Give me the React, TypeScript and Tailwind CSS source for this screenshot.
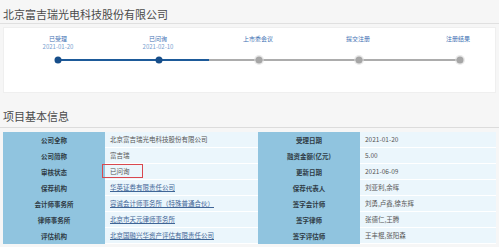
import React from "react";

const steps = [
  { label: "已受理", date: "2021-01-20" },
  { label: "已问询", date: "2021-02-10" },
  { label: "上市委会议", date: "" },
  { label: "提交注册", date: "" },
  { label: "注册结果", date: "" },
];

type Cell = { text: string; link?: boolean; boxed?: boolean };
const rows: [string, Cell, string, Cell][] = [
  ["公司全称", { text: "北京富吉瑞光电科技股份有限公司" }, "受理日期", { text: "2021-01-20" }],
  ["公司简称", { text: "富吉瑞" }, "融资金额(亿元)", { text: "5.00" }],
  ["审核状态", { text: "已问询", boxed: true }, "更新日期", { text: "2021-06-09" }],
  ["保荐机构", { text: "华英证券有限责任公司", link: true }, "保荐代表人", { text: "刘亚利,余晖" }],
  ["会计师事务所", { text: "容诚会计师事务所（特殊普通合伙）", link: true }, "签字会计师", { text: "刘勇,卢鑫,徐东辉" }],
  ["律师事务所", { text: "北京市天元律师事务所", link: true }, "签字律师", { text: "张德仁,王腾" }],
  ["评估机构", { text: "北京国融兴华资产评估有限责任公司", link: true }, "签字评估师", { text: "王丰棍,张阳森" }],
];

function Label({ t }: { t: string }) {
  return (
    <div className="h-[16px] bg-[#90c4df] flex items-center justify-center text-[6.5px] font-bold text-[#2f3b45] leading-none">
      {t}
    </div>
  );
}

function Value({ c }: { c: Cell }) {
  return (
    <div className="relative h-[16px] bg-[#ebf6fc] border-b border-white flex items-center pl-[5px] text-[6.5px] text-[#555] leading-none whitespace-nowrap">
      <span className={c.link ? "underline text-[#3f6596]" : ""}>{c.text}</span>
      {c.boxed && (
        <div className="absolute left-[-3px] top-0 w-[41px] h-[14px] border border-[#d9484f]" />
      )}
    </div>
  );
}

export default function App() {
  const xs = [54, 155, 255, 355, 456];
  return (
    <div className="w-[499px] h-[247px] bg-[#f6f6f6] overflow-hidden font-['Noto_Sans_CJK_SC',sans-serif]">
      <div className="h-[24px] border-b border-[#e0e0e0] pl-[3px] pt-[6px] text-[11px] leading-[16px] text-[#4a4a4a]">
        北京富吉瑞光电科技股份有限公司
      </div>
      <div className="mx-[3px] mt-[3px] h-[66px] bg-white border border-[#efefef] pt-[7px]">
        <div className="grid grid-cols-[repeat(5,100px)] pl-[4px]">
          {steps.map((s) => (
            <div key={s.label} className="flex flex-col items-center">
              <div className="h-[8px] leading-[8px] text-[6px] text-[#3d6fb3]">{s.label}</div>
              <div className="h-[8px] leading-[8px] text-[6px] text-[#79a0cf]">{s.date}</div>
            </div>
          ))}
        </div>
        <svg width="493" height="12" className="mt-[3px] block">
          <line x1={xs[0]} y1="6" x2={xs[4]} y2="6" stroke="#acacac" strokeWidth="2" />
          <line x1={xs[0]} y1="6" x2="205" y2="6" stroke="#1d5a99" strokeWidth="2" />
          {xs.map((x, i) => (
            <g key={x}>
              {i >= 2 && <circle cx={x} cy="6" r="5" fill="#dcdcdc" opacity="0.6" />}
              <circle cx={x} cy="6" r="3.5" fill={i < 2 ? "#174e8a" : "#a6a6a6"} />
            </g>
          ))}
        </svg>
      </div>
      <div className="h-[35px] border-b border-[#dcdcdc] pl-[3px] pt-[15px] text-[11px] leading-[16px] text-[#4a4a4a]">
        项目基本信息
      </div>
      <div className="mx-[3px] mt-[4px] grid grid-cols-[102px_153px_102px_136px]">
        {rows.map(([l1, v1, l2, v2]) => (
          <React.Fragment key={l1}>
            <Label t={l1} />
            <Value c={v1} />
            <Label t={l2} />
            <Value c={v2} />
          </React.Fragment>
        ))}
      </div>
    </div>
  );
}
